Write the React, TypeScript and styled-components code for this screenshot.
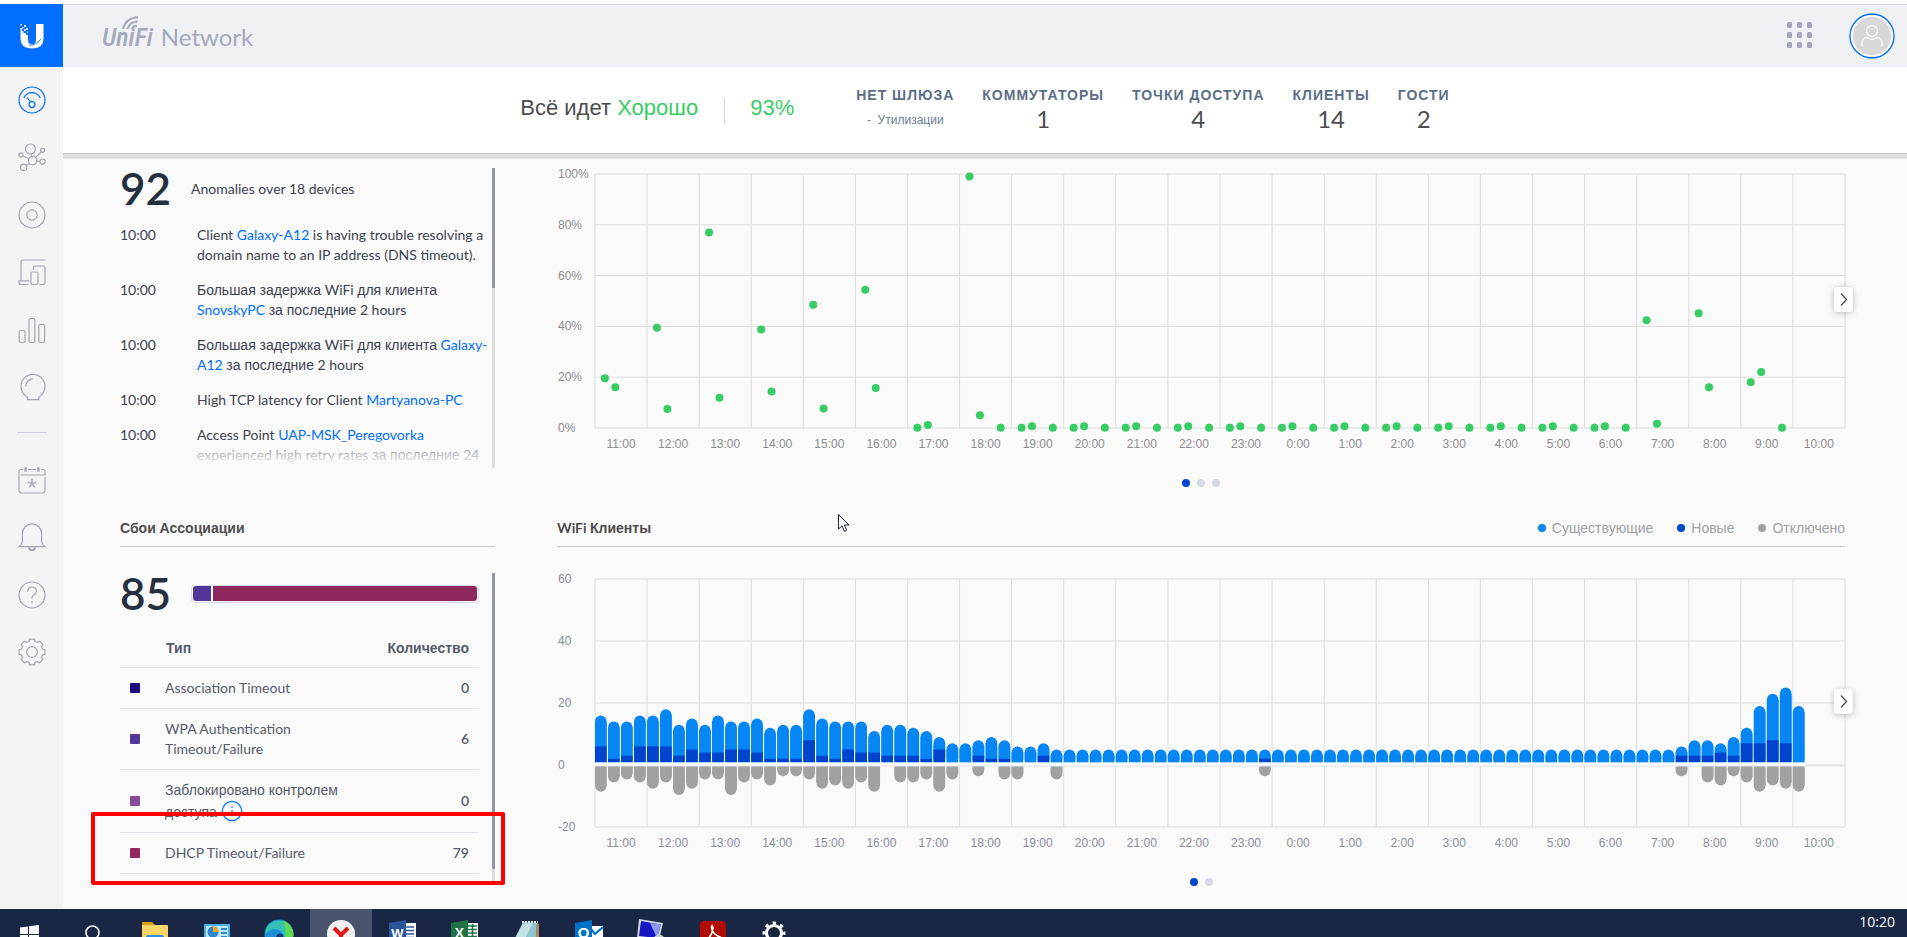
import React from 'react';
import styled, { createGlobalStyle } from 'styled-components';

const lato = `Lato, "Liberation Sans", sans-serif`;
const arial = `"Liberation Sans", Arial, sans-serif`;

const GlobalStyle = createGlobalStyle`
  *, *::before, *::after { box-sizing: border-box; }
  body { margin: 0; font-family: ${lato}; font-size: 14px; line-height: 20px; color: #3c4350; background: #fafafa; }
  button { font: inherit; border: 0; padding: 0; background: none; cursor: pointer; }
  a { color: #006fff; text-decoration: none; }
  h2 { margin: 0; }
`;

const Screen = styled.div`
  height: 100vh;
  display: flex;
  flex-direction: column;
  overflow: hidden;
`;

/* ---------- header ---------- */

const Header = styled.header`
  display: flex;
  align-items: center;
  flex: none;
  height: 67px;
  padding-right: 12px;
  border-top: 4px solid #fff;
  box-shadow: inset 0 1px 0 #d9d9db;
  background: #f0f1f4;
`;

const HomeLink = styled.a`
  display: grid;
  place-items: center;
  width: 63px;
  height: 63px;
  background: #006fff;
`;

const Brand = styled.div`
  display: flex;
  align-items: baseline;
  gap: 8px;
  flex: 1;
  padding: 2px 0 0 39px;
  color: #a5a9b9;
`;

const BrandMark = styled.span`
  position: relative;
  font: italic 500 26px/30px "Roboto Condensed", Lato, sans-serif;
`;

const BrandWaves = styled.svg`
  position: absolute;
  left: 20px;
  top: -6px;
`;

const BrandName = styled.span`
  font-size: 24px;
  line-height: 30px;
`;

const AppsButton = styled.button`
  width: 28px;
  height: 28px;
  margin-right: 36px;
`;

const AvatarButton = styled.button`
  width: 46px;
  height: 46px;
`;

/* ---------- body ---------- */

const Body = styled.div`
  display: flex;
  flex: 1;
  min-height: 0;
`;

const Sidebar = styled.nav`
  display: flex;
  flex-direction: column;
  align-items: center;
  flex: none;
  width: 63px;
  padding-top: 4px;
  background: #f4f4f4;
`;

const SideGroup = styled.div<{ $height: number }>`
  display: flex;
  flex-direction: column;
  height: ${p => p.$height}px;
`;

const SideLink = styled.a<{ $active?: boolean }>`
  display: grid;
  place-items: center;
  flex: 1;
  color: ${p => (p.$active ? '#006fff' : '#a2a5b5')};
`;

const SideDivider = styled.hr`
  width: 30px;
  height: 1px;
  margin: 16px 0 18px;
  border: 0;
  background: #cfd2de;
`;

const Main = styled.main`
  display: flex;
  flex-direction: column;
  flex: 1;
  min-width: 0;
`;

const StatusBar = styled.section`
  display: flex;
  align-items: center;
  justify-content: center;
  flex: none;
  height: 92px;
  padding-bottom: 6px;
  border-bottom: 5px solid #e0e0e0;
  box-shadow: inset 0 -1px 0 #c6c6c6;
  background: #fff;
`;

const Health = styled.div`
  font: 22px/28px ${arial};
  color: #4d4d4d;
`;

const Good = styled.span`
  color: #38cc65;
`;

const HealthRule = styled.span`
  width: 1px;
  height: 26px;
  margin: 6px 25px 0 26px;
  background: #d3d5d9;
`;

const Stats = styled.div`
  display: flex;
  gap: 28px;
  margin: 5px 0 0 62px;
`;

const Stat = styled.div`
  display: flex;
  flex-direction: column;
  align-items: center;
`;

const StatLabel = styled.span`
  font: 700 14px/20px ${arial};
  letter-spacing: 1px;
  color: #5b6e87;
`;

const StatValue = styled.span`
  font-size: 24px;
  line-height: 28px;
  color: #4d4d4d;
`;

const StatNote = styled.span`
  font: 12px/30px ${arial};
  color: #6a7b92;
  white-space: pre;
`;

const Grid = styled.div`
  display: grid;
  grid-template-columns: 375px minmax(0, 1fr);
  grid-template-rows: 342px auto;
  column-gap: 62px;
  padding: 9px 62px 0 57px;
`;

const Scroller = styled.div<{ $height: number }>`
  position: relative;
  height: ${p => p.$height}px;
  padding-right: 16px;
  overflow: hidden;
`;

const Track = styled.div`
  position: absolute;
  top: 0;
  right: 0;
  bottom: 0;
  width: 3px;
  background: #dedede;
`;

const Thumb = styled.div<{ $height: number }>`
  height: ${p => p.$height}px;
  background: #9297a3;
`;

const Summary = styled.div`
  display: flex;
  align-items: center;
  height: 42px;
`;

const BigNumber = styled.strong`
  width: 71px;
  padding-bottom: 2px;
  font-size: 44px;
  line-height: 40px;
  font-weight: 600;
  color: #262f3e;
`;

const EventList = styled.ul`
  margin: 15px 0 0;
  padding: 0;
  list-style: none;
`;

const EventRow = styled.li`
  display: flex;
  margin-bottom: 15px;
`;

const EventTime = styled.time`
  flex: none;
  width: 77px;
`;

const EventText = styled.span`
  flex: 1;
  margin-right: -12px;
`;

const Cyr = styled.span`
  font-family: ${arial};
`;

const Fade = styled.div`
  position: absolute;
  left: 0;
  right: 3px;
  bottom: 0;
  height: 28px;
  background: linear-gradient(rgba(250, 250, 250, 0.2), #fafafa 90%);
`;

const PanelHead = styled.div`
  display: flex;
  align-items: center;
  justify-content: space-between;
  height: 37px;
  padding-bottom: 1px;
  border-bottom: 1px solid #c4c4c6;
`;

const PanelTitle = styled.h2`
  font: 700 14px/20px ${lato};
  color: #4d4d4d;
`;

const Legend = styled.div`
  display: flex;
  gap: 24px;
`;

const LegendItem = styled.span<{ $color: string }>`
  display: flex;
  align-items: center;
  gap: 6px;
  font: 14px/20px ${arial};
  color: #a0a1a4;
  &::before {
    content: '';
    width: 8px;
    height: 8px;
    border-radius: 50%;
    background: ${p => p.$color};
  }
`;

const Failures = styled.div`
  padding-top: 26px;
`;

const SplitBar = styled.div`
  display: flex;
  gap: 2px;
  flex: 1;
  height: 18px;
  padding: 0 1px 1px;
  border: 1px solid #d9dbe6;
  border-radius: 4px;
  background: #fff;
`;

const Segment = styled.div<{ $color: string; $grow: number }>`
  flex: ${p => p.$grow};
  background: ${p => p.$color};
  &:first-child { border-radius: 3px 0 0 3px; }
  &:last-child { border-radius: 0 3px 3px 0; }
`;

const Table = styled.table`
  width: 100%;
  margin-top: 14px;
  border-collapse: collapse;
  color: #565b69;
`;

const HeadCell = styled.th<{ $right?: boolean }>`
  height: 38px;
  padding: 1px 10px 0 1px;
  border-bottom: 1px solid #e3e4ea;
  font: 700 14px/20px ${arial};
  text-align: ${p => (p.$right ? 'right' : 'left')};
`;

const Cell = styled.td<{ $count?: boolean }>`
  padding: 10px ${p => (p.$count ? 10 : 0)}px 10px 0;
  border-bottom: 1px solid #e3e4ea;
  font-weight: ${p => (p.$count ? 600 : 400)};
  text-align: ${p => (p.$count ? 'right' : 'left')};
`;

const SwatchCell = styled.td`
  width: 45px;
  padding: 0 0 0 10px;
  border-bottom: 1px solid #e3e4ea;
`;

const Swatch = styled.span<{ $color: string }>`
  display: block;
  width: 10px;
  height: 10px;
  border-radius: 1px;
  background: ${p => p.$color};
`;

const TypeName = styled.div`
  max-width: 190px;
`;

const InfoIcon = styled.svg`
  margin-left: 4px;
  vertical-align: -5px;
`;

const Highlight = styled.div`
  position: absolute;
  left: -29px;
  bottom: 1px;
  width: 414px;
  height: 73px;
  border: 4px solid #fe0000;
  border-radius: 2px;
`;

const FailureArea = styled.section`
  position: relative;
`;

/* ---------- charts ---------- */

const ChartBox = styled.section`
  position: relative;
`;

const ChartRow = styled.div`
  display: flex;
`;

const YAxis = styled.div<{ $height: number; $tint: string }>`
  display: flex;
  flex-direction: column;
  justify-content: space-between;
  flex: none;
  width: 38px;
  height: ${p => p.$height + 16}px;
  padding-left: 1px;
  font: 12px/16px ${arial};
  color: ${p => p.$tint};
`;

const Plot = styled.svg`
  flex: 1;
  min-width: 0;
  margin: 8px 0;
  overflow: visible;
`;

const XAxis = styled.div<{ $tint: string }>`
  display: flex;
  padding-left: 38px;
  font: 12px/16px ${arial};
  color: ${p => p.$tint};
`;

const XLabel = styled.span`
  flex: 1 0 0;
  text-align: center;
`;

const Pager = styled.div`
  display: flex;
  justify-content: center;
  gap: 7px;
  margin-top: 27px;
`;

const PagerDot = styled.button<{ $on?: boolean }>`
  width: 8px;
  height: 8px;
  border-radius: 50%;
  background: ${p => (p.$on ? '#0047cc' : '#d6d9e4')};
`;

const NextButton = styled.button<{ $top: number }>`
  position: absolute;
  right: -8px;
  top: ${p => p.$top}px;
  display: grid;
  place-items: center;
  width: 19px;
  height: 25px;
  border-radius: 4px;
  background: #fff;
  box-shadow: 0 1px 6px rgba(0, 0, 0, 0.25);
`;

const Pointer = styled.svg`
  position: absolute;
  left: 837px;
  top: 513px;
`;

const ScatterPart = styled.div`
  margin-top: -2px;
`;

const BarPart = styled.div`
  margin-top: 24px;
`;

/* ---------- taskbar ---------- */

const Taskbar = styled.footer`
  display: flex;
  flex: none;
  height: 28px;
  padding-right: 12px;
  background: #1a2744;
  overflow: hidden;
`;

const TaskItem = styled.button<{ $active?: boolean }>`
  display: flex;
  justify-content: center;
  align-items: flex-start;
  flex: none;
  width: 62px;
  padding-top: 11px;
  background: ${p => (p.$active ? '#49546c' : 'transparent')};
`;

const Clock = styled.time`
  margin-left: auto;
  font: 14px/26px "Open Sans", sans-serif;
  color: #fff;
`;

/* ---------- data ---------- */

const hours = ['11:00', '12:00', '13:00', '14:00', '15:00', '16:00', '17:00', '18:00', '19:00', '20:00', '21:00', '22:00', '23:00',
  '0:00', '1:00', '2:00', '3:00', '4:00', '5:00', '6:00', '7:00', '8:00', '9:00', '10:00'];

const points: [number, number][] = [
  [0.19, 19.6], [0.39, 16], [1.19, 39.5], [1.39, 7.5], [2.19, 77], [2.39, 11.9], [3.19, 38.8], [3.39, 14.4],
  [4.19, 48.5], [4.39, 7.7], [5.19, 54.4], [5.39, 15.7], [6.19, 0.1], [6.39, 1.2], [7.19, 99], [7.39, 5], [7.79, 0.1],
];
for (let h = 8; h < 20; h += 1) points.push([h + 0.19, 0.1], [h + 0.39, 0.7], [h + 0.79, 0.1]);
points.push([20.19, 42.4], [20.39, 1.7], [21.19, 45.2], [21.39, 16], [22.19, 18], [22.39, 22], [22.79, 0.1]);

type BarValue = [total: number, fresh: number, gone: number];
const bars: BarValue[] = [
  [16, 6, 8], [14, 2, 5], [14, 3, 4], [16, 6, 5], [16, 6, 7], [18, 6, 5], [13, 3, 9], [15, 5, 7],
  [13, 4, 4], [16, 4, 4], [14, 5, 9], [14, 5, 5], [15, 4, 4], [12, 2, 6], [13, 2, 3], [13, 2, 3],
  [18, 8, 4], [15, 3, 7], [14, 2, 6], [14, 5, 7], [14, 4, 5], [11, 4, 8], [13, 3, 0], [13, 3, 5],
  [12, 3, 5], [11, 2, 4], [9, 5, 8], [7, 0, 4], [7, 0, 0], [8, 3, 3], [9, 2, 0], [8, 2, 4],
  [6, 0, 4], [6, 0, 0], [7, 3, 0], [5, 0, 4],
];
for (let i = 36; i < 83; i += 1) bars.push(i === 51 ? [5, 2, 3] : [5, 0, 0]);
bars.push([6, 3, 3], [8, 3, 0], [8, 3, 5], [7, 4, 6], [9, 3, 3], [12, 7, 5], [19, 7, 8], [23, 8, 6], [25, 7, 7], [19, 0, 8]);

const failureRows = [
  { color: '#1f0b80', name: 'Association Timeout', count: 0 },
  { color: '#54369b', name: 'WPA Authentication Timeout/Failure', count: 6 },
  { color: '#8a4a9c', name: 'Заблокировано контролем доступа', count: 0, info: true },
  { color: '#932760', name: 'DHCP Timeout/Failure', count: 79 },
];

/* ---------- pieces ---------- */

const pct = (v: number) => `${v}%`;

/** Sets Cyrillic runs in the sans face, leaving Latin runs in Lato. */
const Mixed = ({ text }: { text: string }) => (
  <>
    {text.split(/([\u0400-\u04ff]+(?:\s+[\u0400-\u04ff]+)*)/).map((part, i) => (i % 2 ? <Cyr key={i}>{part}</Cyr> : part))}
  </>
);

const GridLines = ({ rows, height }: { rows: number; height: number }) => (
  <g stroke="#dcdcde" strokeWidth={1}>
    {Array.from({ length: 25 }, (_, i) => (
      <line key={`v${i}`} x1={pct((i / 24) * 100)} x2={pct((i / 24) * 100)} y1={0} y2={height} />
    ))}
    {Array.from({ length: rows + 1 }, (_, i) => (
      <line key={`h${i}`} x1="0" x2="100%" y1={(i / rows) * height} y2={(i / rows) * height} />
    ))}
  </g>
);

const ScatterChart = () => {
  const height = 254;
  return (
    <ChartRow>
      <YAxis $height={height} $tint="#8c8d8f">
        {['100%', '80%', '60%', '40%', '20%', '0%'].map(t => <span key={t}>{t}</span>)}
      </YAxis>
      <Plot height={height} role="img" aria-label="Retry rate">
        <GridLines rows={5} height={height} />
        {points.map(([x, v]) => (
          <circle key={x} cx={pct((x / 24) * 100)} cy={height * (1 - v / 100)} r={4} fill="#38cc65" />
        ))}
      </Plot>
    </ChartRow>
  );
};

const BarChart = () => {
  const height = 248;
  const unit = height / 80;
  const zero = 60 * unit;
  const w = pct((0.89 / 96) * 100);
  return (
    <ChartRow>
      <YAxis $height={height} $tint="#8a8e9d">
        {['60', '40', '20', '0', '-20'].map(t => <span key={t}>{t}</span>)}
      </YAxis>
      <Plot height={height} role="img" aria-label="WiFi">
        <GridLines rows={4} height={height} />
        {bars.map(([total, fresh, gone], i) => {
          const x = pct((i / 96) * 100);
          const top = zero - total * unit;
          const base = zero - 3;
          return (
            <g key={i}>
              <rect x={x} y={top} width={w} height={base - top + 3} rx={6} fill="#0586f2" />
              <rect x={x} y={top + 6} width={w} height={base - top - 6} fill="#0586f2" />
              {fresh > 0 && <rect x={x} y={zero - fresh * unit} width={w} height={fresh * unit - 3} fill="#0043cc" />}
              <rect x={x} y={base} width={w} height={1} fill="#a9d3f8" />
              {gone > 0 && (
                <>
                  <rect x={x} y={zero - 2} width={w} height={gone * unit + 4} rx={6} fill="#a0a1a3" />
                  <rect x={x} y={zero + 1} width={w} height={gone * unit - 5} fill="#a0a1a3" />
                </>
              )}
            </g>
          );
        })}
        <rect x="0" y={zero - 2} width={pct((93 / 96) * 100)} height={3} fill="#fff" />
        <line x1="0" x2="100%" y1={zero + 1} y2={zero + 1} stroke="#e4e4e6" />
      </Plot>
    </ChartRow>
  );
};

const HourAxis = ({ tint }: { tint: string }) => (
  <XAxis $tint={tint}>{hours.map(h => <XLabel key={h}>{h}</XLabel>)}</XAxis>
);

const Next = ({ top }: { top: number }) => (
  <NextButton $top={top} aria-label="Next">
    <svg width="9" height="15" viewBox="0 0 9 15" fill="none" stroke="#3c4350" strokeWidth="1.2">
      <path d="M2 1.5 L7.5 7.5 L2 13.5" />
    </svg>
  </NextButton>
);

const Dots = ({ count }: { count: number }) => (
  <Pager>
    {Array.from({ length: count }, (_, i) => <PagerDot key={i} $on={i === 0} aria-label={`Page ${i + 1}`} />)}
  </Pager>
);

/* Eight flat teeth joined by short concave valleys. */
const gearPath = Array.from({ length: 8 }, (_, i) => {
  const at = (deg: number, r: number) => {
    const a = ((i * 45 + deg - 90) * Math.PI) / 180;
    return `${(14 + r * Math.cos(a)).toFixed(2)} ${(14 + r * Math.sin(a)).toFixed(2)}`;
  };
  return `${i ? 'L' : 'M'}${at(-11, 13.2)} L${at(11, 13.2)} L${at(14, 11.2)} Q${at(22.5, 10.4)} ${at(31, 11.2)}`;
}).join(' ') + 'Z';

const sideIcons = {
  dashboard: <><circle cx="14" cy="14" r="13" /><path d="M5.8 12 A9 9 0 0 1 22.2 12 M9 11.4 L12.5 16" /><circle cx="14" cy="18.6" r="3" /></>,
  topology: <><circle cx="12.4" cy="6" r="5" /><circle cx="14.6" cy="17.6" r="4.2" /><circle cx="3" cy="12" r="2.2" /><circle cx="24.5" cy="7.3" r="2" /><circle cx="24.6" cy="18.6" r="2.6" /><circle cx="5.6" cy="24.4" r="3.2" /><path d="M13 11 L13.8 13.4 M5 13 L10.8 15.8 M23 8.8 L17.5 14.6 M18.8 18 L22 18.4 M11.6 20.5 L8 22.2" /></>,
  devices: <><circle cx="14" cy="14" r="13" /><circle cx="14" cy="14" r="5.2" /></>,
  clients: <><path d="M27.5 2 H5 Q3 2 3 4 V22 M1 26.5 H10.5 M11.5 22.8 H1 V24.5 Q1 26.5 3 26.5 M15.5 12 V10 Q15.5 8 17.5 8 H25 Q27 8 27 10 V24.5 Q27 26.5 25 26.5 H21.5" /><rect x="13" y="14" width="7" height="12.5" rx="1.5" /></>,
  stats: <><rect x="1.2" y="14.5" width="5.8" height="12" rx="1.5" /><rect x="11" y="2.5" width="5.8" height="24" rx="1.5" /><rect x="20.8" y="8.5" width="5.8" height="18" rx="1.5" /></>,
  insights: <><path d="M9.3 24 Q3 20.5 3 13.3 A12 12 0 0 1 27 13.3 Q27 20.5 20.9 24 V26.6 H9.3 Z M7.8 13.5 Q8 7 15 5.6" /></>,
  events: <><path d="M5 3.5 H3 Q1 3.5 1 5.5 V24.5 Q1 27 3.5 27 H24.5 Q27 27 27 24.5 V11 M10 3.5 H18 M23 3.5 H25.5 Q27 3.5 27 5.5 V9 H2.5" /><path d="M7.6 1.2 V5.8 M20.4 1.2 V5.8" strokeWidth="2.4" /><path d="M14 12.5 V17.6 L9.6 16.2 M14 17.6 L18.4 16.2 M14 17.6 L11.2 21.4 M14 17.6 L16.8 21.4" strokeWidth="1.4" /></>,
  alerts: <><path d="M1 23.6 H27 Q23.6 21.4 23.6 17.6 V10.5 A9.6 9.6 0 0 0 4.4 10.5 V17.6 Q4.4 21.4 1 23.6 Z" /><path d="M10.8 24.6 Q11.5 27.4 14 27.4 Q16.5 27.4 17.2 24.6" strokeWidth="2" /></>,
  help: <><circle cx="14" cy="14" r="13" /><path d="M9.8 10.5 Q9.8 6 14 6 Q18.4 6 18.4 10.2 Q18.4 12.6 15.8 13.8 Q14 14.8 14 17.5 M14 20 V22.4" /></>,
  settings: <><path d={gearPath} strokeLinejoin="round" /><circle cx="14" cy="14" r="5.4" /></>,
};

const SideIcon = ({ name, active }: { name: keyof typeof sideIcons; active?: boolean }) => (
  <SideLink href={`#${name}`} $active={active} aria-label={name}>
    <svg width="28" height="28" viewBox="0 0 28 28" fill="none" stroke="currentColor" strokeWidth="1.2">{sideIcons[name]}</svg>
  </SideLink>
);

const taskIcons: { name: string; active?: boolean; art: React.ReactNode }[] = [
  { name: 'Start', art: <path d="M3 7.5 L11 6.4 V14 H3 Z M12 6.2 L22 5 V14 H12 Z M3 15 H11 V23 L3 22 Z M12 15 H22 V24 L12 23 Z" fill="#fff" /> },
  { name: 'Search', art: <circle cx="13.5" cy="12.5" r="6.5" fill="none" stroke="#fff" strokeWidth="1.6" /> },
  { name: 'Files', art: <><path d="M1 3 Q1 2 2 2 H11 L14 5 V9 H1 Z" fill="#e2a106" /><rect x="1" y="5" width="26" height="20" rx="1" fill="#ffd667" /><path d="M5 17 Q5 15 7 15 H21 Q23 15 23 17 V26 H5 Z" fill="#2f8fe0" /></> },
  { name: 'Control panel', art: <><rect x="1" y="4" width="26" height="22" rx="1" fill="#4bb1e4" /><rect x="3" y="6" width="22" height="18" fill="#bfe6f8" /><circle cx="10" cy="12" r="5.5" fill="#2d86cc" /><path d="M10 12 V6.5 A5.5 5.5 0 0 1 15.5 12 Z" fill="#f6a31c" /><path d="M18 9 H24 M18 13 H24 M18 17 H24" stroke="#2d86cc" strokeWidth="2" /></> },
  { name: 'Edge', art: <><circle cx="14" cy="14" r="14.5" fill="#1c8fd6" /><path d="M2 7 A14.5 14.5 0 0 1 28.5 14 Q28 20 20 20 Q19 10 10 9 Q5 9 1 14 Q0 10 2 7Z" fill="#35c1b4" /><path d="M18 0.8 A14.5 14.5 0 0 1 28.5 16 Q26 21 20 19 Q22 10 18 0.8Z" fill="#63d94f" /><path d="M11 18 Q12 12 17 14 Q19 16 18 20Z" fill="#123c72" /></> },
  { name: 'Yandex', active: true, art: <><circle cx="14" cy="14" r="14" fill="#f3f2f2" /><path d="M7 8 L14 15 L21 8 M14 15 V26" stroke="#df1516" strokeWidth="4" fill="none" /></> },
  { name: 'Word', art: <><rect x="14" y="3" width="13" height="22" fill="#fff" /><path d="M17 7 H25 M17 10.5 H25 M17 14 H25 M17 17.5 H25" stroke="#2a5699" strokeWidth="1.6" /><path d="M0 3 L17 0 V28 L0 25 Z" fill="#2a5699" /><text x="8.5" y="18" fill="#fff" fontFamily="Liberation Sans" fontWeight="700" fontSize="13" textAnchor="middle">W</text></> },
  { name: 'Excel', art: <><rect x="14" y="3" width="13" height="22" fill="#fff" /><path d="M17 6 H26 M17 9.5 H26 M17 13 H26 M17 16.5 H26 M21.5 4 V24" stroke="#207245" strokeWidth="1.6" /><path d="M0 3 L17 0 V28 L0 25 Z" fill="#207245" /><text x="8.5" y="18" fill="#fff" fontFamily="Liberation Sans" fontWeight="700" fontSize="14" textAnchor="middle">X</text></> },
  { name: 'Notepad', art: <><path d="M10 2 L24 3 L23 26 H-2 Z" fill="#8fc5cf" /><path d="M10 4 L20 3 L8 26 H-2 Z" fill="#c5e2e6" /><path d="M24 3 L26 4 V26 L22 26 Z" fill="#b08a5c" /><path d="M9 2 H25" stroke="#e8ecec" strokeWidth="2" strokeDasharray="2 1" /></> },
  { name: 'Outlook', art: <><rect x="14" y="6" width="14" height="18" fill="#fff" /><path d="M15 8 L20 14 L28 7" stroke="#0072c6" strokeWidth="2.2" fill="none" /><path d="M0 3 L17 0 V28 L0 25 Z" fill="#0072c6" /><text x="8.5" y="18" fill="#fff" fontFamily="Liberation Sans" fontWeight="700" fontSize="15" textAnchor="middle">O</text></> },
  { name: 'Remote', art: <><path d="M2 -1 L26 3 L22 20 L0 18 Z" fill="#d5d9dd" /><path d="M4 1 L24 4.5 L20 18 L2 16 Z" fill="#1515c4" /><path d="M13 3 L24 4.5 L20 18 Z" fill="#8f96f2" /><circle cx="22" cy="20" r="5.5" fill="#c9ced3" /></> },
  { name: 'Acrobat', art: <><rect x="1" y="1" width="26" height="26" rx="4" fill="#b30b00" /><path d="M6 21 Q13 17 14 8 Q13 4 12.5 7 Q13 14 21 17 Q24 19 20 18.5 Q12 17 6 21Z" fill="none" stroke="#fff" strokeWidth="1.7" /></> },
  { name: 'Settings', art: <g fill="none" stroke="#fff"><circle cx="13" cy="13" r="7.5" strokeWidth="3" /><circle cx="13" cy="13" r="10" strokeWidth="3" strokeDasharray="3.4 4.45" strokeDashoffset="1.7" /></g> },
];

export default function App() {
  return (
    <Screen>
      <GlobalStyle />
      <Header>
        <HomeLink href="#home" aria-label="Home">
          <svg width="26" height="26" viewBox="0 0 26 26" fill="#fff">
            <path d="M17 1 H24.5 V15 Q24.5 25.5 13 25.5 Q1.5 25.5 1.5 15 V5 H3 V8 H4.5 V10 H7 V12 H9 V17 Q9 21 13 21.5 Q17 21 17 17 Z" />
            <path d="M1.5 1 H3 V2.5 H1.5 Z M5 2 H7 V4 H5 Z M3 4 H4.5 V5.5 H3 Z M7 5 H8.6 V7 H7 Z M5 6 H6.5 V8 H5 Z M8 8.5 H9 V10 H8 Z" />
            <path d="M10 22.3 Q17 22.5 22 16" stroke="#006fff" fill="none" strokeWidth="0.8" />
          </svg>
        </HomeLink>
        <Brand>
          <BrandMark>
            UniFi
            <BrandWaves width="18" height="14" viewBox="0 0 18 14" fill="none" stroke="#a5a9b9" strokeWidth="2">
              <path d="M1 13 Q4 1.5 16 1.2 M5.5 13 Q7.5 6 15.5 5.6 M10 13 Q11 10 15 9.8" />
            </BrandWaves>
          </BrandMark>
          <BrandName>Network</BrandName>
        </Brand>
        <AppsButton aria-label="Apps">
          <svg width="28" height="28" viewBox="0 0 28 28" fill="#a3a6b6">
            {[4, 14, 24].map(y => [4, 14, 24].map(x => <rect key={`${x}-${y}`} x={x - 2} y={y - 4} width="5" height="6" rx="1.5" />))}
          </svg>
        </AppsButton>
        <AvatarButton aria-label="Account">
          <svg width="46" height="46" viewBox="0 0 46 46" fill="none">
            <circle cx="23" cy="23" r="22" fill="#f7f7f8" stroke="#006fff" strokeWidth="1.3" />
            <circle cx="23" cy="23" r="19" fill="#d8d8d8" />
            <g stroke="#fafafa" strokeWidth="1.3">
              <circle cx="23" cy="18" r="5.5" />
              <path d="M13 33.5 V30 Q13 24.5 18.5 24.5 Q23 28.5 27.5 24.5 Q33 24.5 33 30 V33.5" />
            </g>
          </svg>
        </AvatarButton>
      </Header>

      <Body>
        <Sidebar>
          <SideGroup $height={345}>
            <SideIcon name="dashboard" active />
            <SideIcon name="topology" />
            <SideIcon name="devices" />
            <SideIcon name="clients" />
            <SideIcon name="stats" />
            <SideIcon name="insights" />
          </SideGroup>
          <SideDivider />
          <SideGroup $height={230}>
            <SideIcon name="events" />
            <SideIcon name="alerts" />
            <SideIcon name="help" />
            <SideIcon name="settings" />
          </SideGroup>
        </Sidebar>

        <Main>
          <StatusBar>
            <Health>Всё идет <Good>Хорошо</Good></Health>
            <HealthRule />
            <Health><Good>93%</Good></Health>
            <Stats>
              <Stat><StatLabel>НЕТ ШЛЮЗА</StatLabel><StatNote>-  Утилизации</StatNote></Stat>
              <Stat><StatLabel>КОММУТАТОРЫ</StatLabel><StatValue>1</StatValue></Stat>
              <Stat><StatLabel>ТОЧКИ ДОСТУПА</StatLabel><StatValue>4</StatValue></Stat>
              <Stat><StatLabel>КЛИЕНТЫ</StatLabel><StatValue>14</StatValue></Stat>
              <Stat><StatLabel>ГОСТИ</StatLabel><StatValue>2</StatValue></Stat>
            </Stats>
          </StatusBar>

          <Grid>
            <section>
              <Scroller $height={300}>
                <Summary><BigNumber>92</BigNumber><span>Anomalies over 18 devices</span></Summary>
                <EventList>
                  <EventRow>
                    <EventTime>10:00</EventTime>
                    <EventText>Client <a href="#c1">Galaxy-A12</a> is having trouble resolving a domain name to an IP address (DNS timeout).</EventText>
                  </EventRow>
                  <EventRow>
                    <EventTime>10:00</EventTime>
                    <EventText><Mixed text="Большая задержка WiFi для клиента " /><a href="#c2">SnovskyPC</a><Mixed text=" за последние 2 hours" /></EventText>
                  </EventRow>
                  <EventRow>
                    <EventTime>10:00</EventTime>
                    <EventText><Mixed text="Большая задержка WiFi для клиента " /><a href="#c1">Galaxy-A12</a><Mixed text=" за последние 2 hours" /></EventText>
                  </EventRow>
                  <EventRow>
                    <EventTime>10:00</EventTime>
                    <EventText>High TCP latency for Client <a href="#c3">Martyanova-PC</a></EventText>
                  </EventRow>
                  <EventRow>
                    <EventTime>10:00</EventTime>
                    <EventText>Access Point <a href="#c4">UAP-MSK_Peregovorka</a> <Mixed text="experienced high retry rates за последние 24" /></EventText>
                  </EventRow>
                </EventList>
                <Fade />
                <Track><Thumb $height={120} /></Track>
              </Scroller>
            </section>

            <ChartBox>
              <ScatterPart>
                <ScatterChart />
                <HourAxis tint="#8c8d8f" />
                <Dots count={3} />
              </ScatterPart>
              <Next top={119} />
            </ChartBox>

            <FailureArea>
              <PanelHead><PanelTitle><Mixed text="Сбои Ассоциации" /></PanelTitle></PanelHead>
              <Failures>
                <Scroller $height={312}>
                  <Summary>
                    <BigNumber>85</BigNumber>
                    <SplitBar><Segment $color="#52369b" $grow={18} /><Segment $color="#8f285f" $grow={265} /></SplitBar>
                  </Summary>
                  <Table>
                    <thead>
                      <tr><HeadCell /><HeadCell>Тип</HeadCell><HeadCell $right>Количество</HeadCell></tr>
                    </thead>
                    <tbody>
                      {failureRows.map(row => (
                        <tr key={row.name}>
                          <SwatchCell><Swatch $color={row.color} /></SwatchCell>
                          <Cell>
                            <TypeName>
                              <Mixed text={row.name} />
                              {row.info && (
                                <InfoIcon width="22" height="22" viewBox="0 0 22 22" fill="none" stroke="#1a7dff" strokeWidth="1.4">
                                  <circle cx="11" cy="11" r="9.6" />
                                  <path d="M11 10 V16 M11 6.4 V8" />
                                </InfoIcon>
                              )}
                            </TypeName>
                          </Cell>
                          <Cell $count>{row.count}</Cell>
                        </tr>
                      ))}
                    </tbody>
                  </Table>
                  <Track><Thumb $height={296} /></Track>
                </Scroller>
              </Failures>
              <Highlight />
            </FailureArea>

            <ChartBox>
              <PanelHead>
                <PanelTitle><Mixed text="WiFi Клиенты" /></PanelTitle>
                <Legend>
                  <LegendItem $color="#0586f2">Существующие</LegendItem>
                  <LegendItem $color="#0047cc">Новые</LegendItem>
                  <LegendItem $color="#a0a1a3">Отключено</LegendItem>
                </Legend>
              </PanelHead>
              <BarPart>
                <BarChart />
                <HourAxis tint="#8a8e9d" />
                <Dots count={2} />
              </BarPart>
              <Next top={179} />
            </ChartBox>
          </Grid>
        </Main>
      </Body>

      <Taskbar>
        {taskIcons.map(icon => (
          <TaskItem key={icon.name} $active={icon.active} aria-label={icon.name}>
            <svg width="28" height="28" viewBox="0 0 28 28" overflow="visible">{icon.art}</svg>
          </TaskItem>
        ))}
        <Clock>10:20</Clock>
      </Taskbar>
      <Pointer width="13" height="20" viewBox="0 0 13 20">
        <path d="M1.5 1.5 V16 L5 12.8 L7.4 18.3 L9.6 17.3 L7.3 12 H12 Z" fill="#fff" stroke="#1b2233" strokeWidth="1" />
      </Pointer>
    </Screen>
  );
}
